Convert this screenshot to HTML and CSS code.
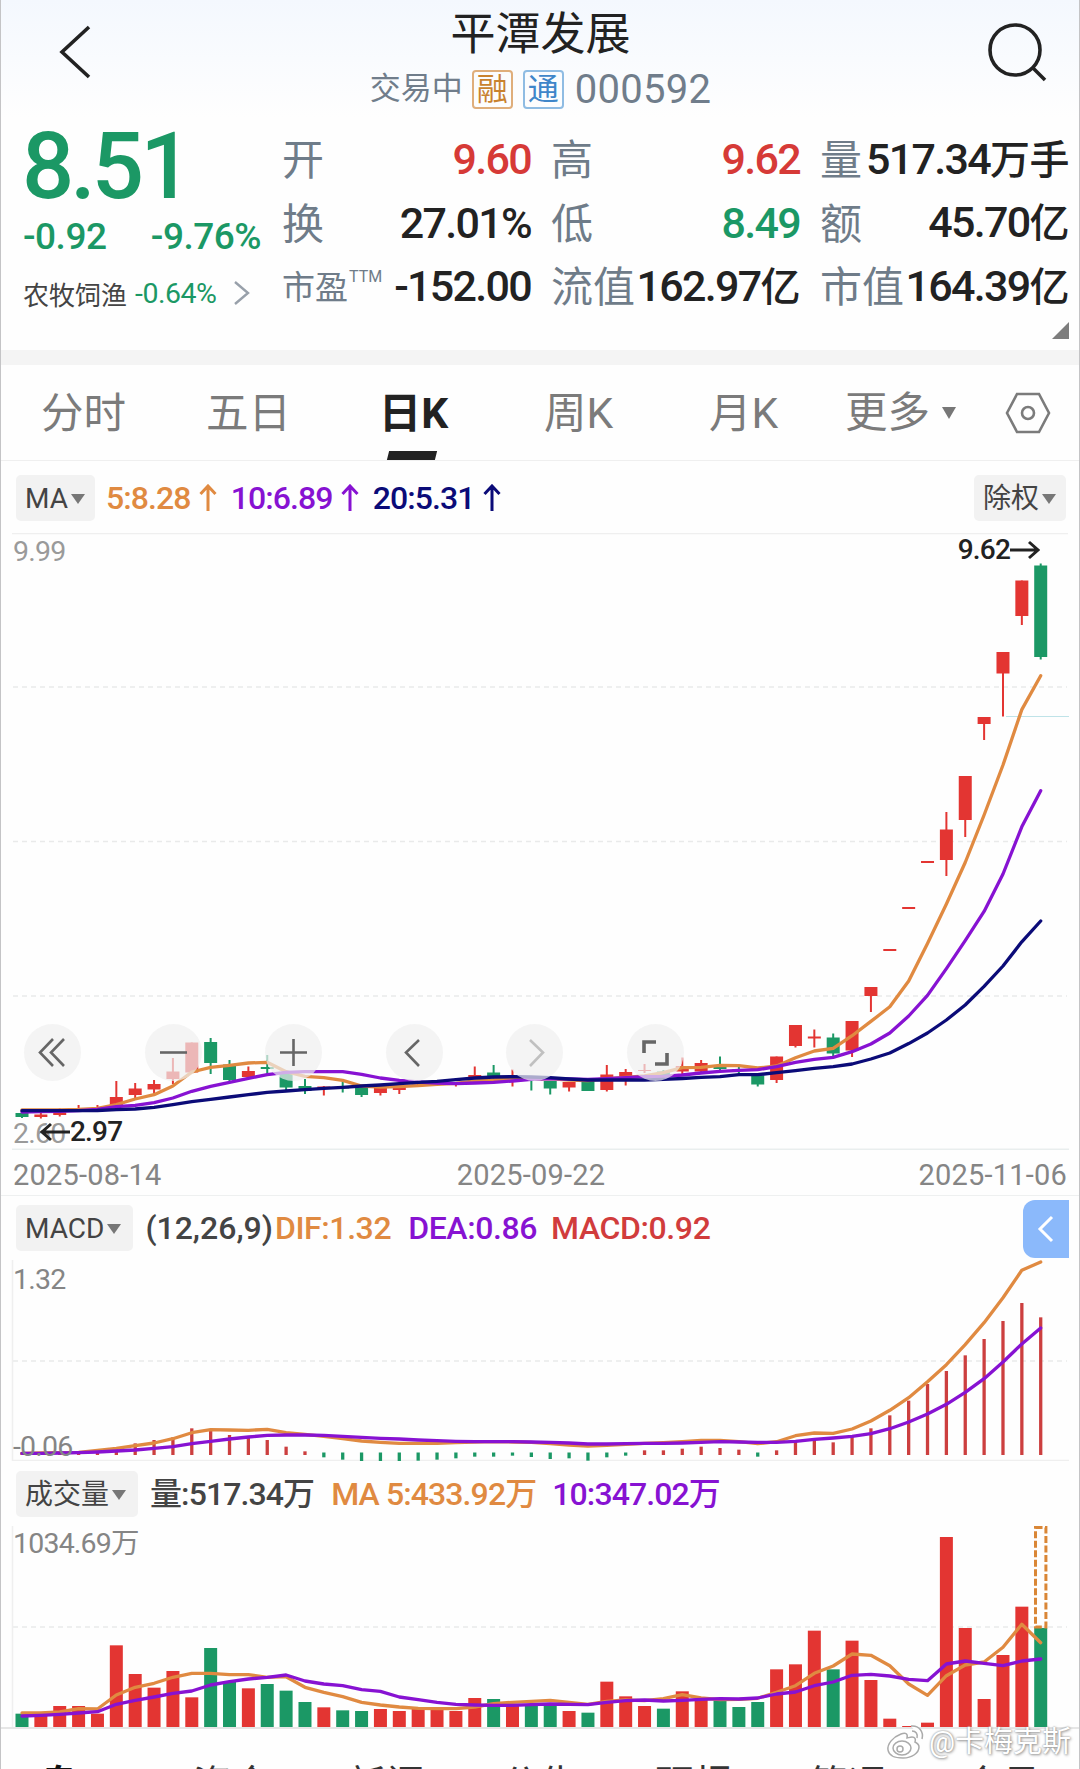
FILE: index.html
```html
<!DOCTYPE html>
<html lang="zh-CN">
<head>
    <meta charset="UTF-8" />
    <meta name="viewport" content="width=device-width, initial-scale=1" />
    <title>平潭发展 000592</title>

    <link rel="stylesheet" href="styles.css">
</head>
<body>

    <!-- 顶部标题 -->
    <header class="header">
        <svg class="back" width="36" height="60" viewBox="0 0 36 60"><path d="M31 5L4 30l27 25" /></svg>
        <div class="title">
            <h1>平潭发展</h1>
            <div class="sub">
                <span class="state">交易中</span>
                <span class="tag rong">融</span>
                <span class="tag tong">通</span>
                <span class="code">000592</span>
            </div>
        </div>
        <svg class="search" width="62" height="62" viewBox="0 0 62 62"><circle cx="28" cy="28" r="25" /><path d="M46 46l12 12" /></svg>
    </header>

    <!-- 行情 -->
    <section class="quote">
        <div class="now">
            <div class="price">8.51</div>
            <div class="change"><span>-0.92</span><span>-9.76%</span></div>
            <div class="sector">
                <span class="name">农牧饲渔</span>
                <span class="pct">-0.64%</span>
                <svg width="18" height="26" viewBox="0 0 18 26"><path d="M2 2l13 11L2 24" /></svg>
            </div>
        </div>
        <dl class="col">
            <div><dt>开</dt><dd class="up">9.60</dd></div>
            <div><dt>换</dt><dd>27.01%</dd></div>
            <div><dt class="small">市盈<sup>TTM</sup></dt><dd>-152.00</dd></div>
        </dl>
        <dl class="col">
            <div><dt>高</dt><dd class="up">9.62</dd></div>
            <div><dt>低</dt><dd class="down">8.49</dd></div>
            <div><dt>流值</dt><dd>162.97<b>亿</b></dd></div>
        </dl>
        <dl class="col">
            <div><dt>量</dt><dd>517.34<b>万手</b></dd></div>
            <div><dt>额</dt><dd>45.70<b>亿</b></dd></div>
            <div><dt>市值</dt><dd>164.39<b>亿</b></dd></div>
        </dl>
        <i class="corner"></i>
    </section>

    <!-- 周期切换 -->
    <nav class="tabs">
        <a>分时</a>
        <a>五日</a>
        <a class="active">日K</a>
        <a>周K</a>
        <a>月K</a>
        <a class="more">更多<i class="tri"></i></a>
        <svg class="setting" width="46" height="42" viewBox="0 0 46 42"><path d="M12 2h22l10 19-10 19H12L2 21z" /><circle cx="23" cy="21" r="6" /></svg>
    </nav>

    <!-- K线 -->
    <div class="bar bar-ma">
        <span class="chip">MA<i class="tri"></i></span>
        <span class="c5">5:8.28<svg class="arr" viewBox="0 0 18 28"><path d="M9 27V2M1.500 10L9 2l7.500 8" /></svg></span>
        <span class="c10">10:6.89<svg class="arr" viewBox="0 0 18 28"><path d="M9 27V2M1.500 10L9 2l7.500 8" /></svg></span>
        <span class="c20">20:5.31<svg class="arr" viewBox="0 0 18 28"><path d="M9 27V2M1.500 10L9 2l7.500 8" /></svg></span>
        <span class="chip right">除权<i class="tri"></i></span>
    </div>
    <div class="chart kline">
        <svg id="kline" width="1080" height="617" viewBox="0 533 1080 617"></svg>
        <span class="label max">9.99</span>
        <span class="label min">2.60</span>
        <span class="mark high">9.62<svg width="30" height="22" viewBox="0 0 30 22"><path d="M0 11h28M19 3l9 8-9 8" /></svg></span>
        <span class="mark low"><svg width="30" height="22" viewBox="0 0 30 22"><path d="M30 11H2M11 3l-9 8 9 8" /></svg>2.97</span>
        <div class="tools">
            <button><svg viewBox="0 0 57 57"><path d="M29 15L16 28.500 29 42M40 15L27 28.500 40 42" /></svg></button>
            <button><svg viewBox="0 0 57 57"><path d="M15 28.500h27" /></svg></button>
            <button><svg viewBox="0 0 57 57"><path d="M15 28.500h27M28.500 15v27" /></svg></button>
            <button><svg viewBox="0 0 57 57"><path d="M33 16L20 28.500 33 42" /></svg></button>
            <button class="off"><svg viewBox="0 0 57 57"><path d="M24 16l13 12.500L24 42" /></svg></button>
            <button><svg viewBox="0 0 57 57"><path class="box" d="M17 29V18h12M40 29v11H28" /></svg></button>
        </div>
    </div>
    <div class="dates"><span>2025-08-14</span><span>2025-09-22</span><span>2025-11-06</span></div>

    <!-- MACD -->
    <div class="bar bar-macd">
        <span class="chip">MACD<i class="tri"></i></span>
        <span class="dark">(12,26,9)</span>
        <span class="c5">DIF:1.32</span>
        <span class="c10">DEA:0.86</span>
        <span class="red">MACD:0.92</span>
        <span class="fold"><svg width="18" height="28" viewBox="0 0 18 28"><path d="M15 2L3 14l12 12" /></svg></span>
    </div>
    <div class="chart macd">
        <svg id="macd" width="1080" height="201" viewBox="0 1260 1080 201"></svg>
        <span class="label max">1.32</span>
        <span class="label min">-0.06</span>
    </div>

    <!-- 成交量 -->
    <div class="bar bar-vol">
        <span class="chip">成交量<i class="tri"></i></span>
        <span class="dark">量:517.34万</span>
        <span class="c5">MA 5:433.92万</span>
        <span class="c10">10:347.02万</span>
    </div>
    <div class="chart vol">
        <svg id="vol" width="1080" height="202" viewBox="0 1526 1080 202"></svg>
        <span class="label max">1034.69万</span>
    </div>

    <nav class="footer">
        <a class="active">盘口</a>
        <a>资金</a>
        <a>新闻</a>
        <a>公告</a>
        <a>研报</a>
        <a>简况</a>
        <a>会员</a>
    </nav>

    <div class="watermark">
        <svg width="40" height="36" viewBox="0 0 40 36">
            <path d="M15 10C7 13 1 20 2 26c1 6 8 8 15 8 9 0 16-5 16-11 0-3-2-4-4-5 1-3 0-5-3-5-2 0-4 1-5 1 1-4-1-6-6-4z" />
            <ellipse cx="16" cy="24" rx="9" ry="7" />
            <circle cx="14" cy="25" r="3" />
            <path d="M25 2c8-1 13 6 11 13M26 7c4 0 6 3 5 7" />
        </svg>
        <span>@卡梅克斯</span>
    </div>

    <script src="chart.js"></script>
</body>
</html>
```
FILE: styles.css
```css
* {
    box-sizing: border-box;
}
body {
    width: 1080px;
    height: 1769px;
    margin: 0;
    overflow: hidden;
    position: relative;
    background: #fefefe;
    font-family: Roboto, "Noto Sans CJK SC", sans-serif;
    color: #222;
    border-left: 1px solid #c4c4c6;
    border-right: 1px solid #c4c4c6;
}
svg {
    display: block;
    fill: none;
    flex: none;
}

/* 顶部标题 */
.header {
    height: 117px;
    display: flex;
    justify-content: space-between;
    padding: 0 30px 0 57px;
    background: linear-gradient(#f4f8fe, #fefefe);
}
.header svg {
    stroke: #222;
    stroke-width: 3.6;
}
.back {
    margin-top: 22px;
}
.search {
    margin-top: 22px;
}
.title {
    display: flex;
    flex-direction: column;
    align-items: center;
}
h1 {
    margin: 0;
    height: 68px;
    line-height: 70px;
    font-size: 45px;
    font-weight: 400;
}
.sub {
    display: flex;
    align-items: center;
    height: 42px;
    color: #707d8b;
}
.state {
    font-size: 31px;
    line-height: 38px;
    margin-right: 9px;
}
.tag {
    width: 41px;
    height: 39px;
    line-height: 35px;
    text-align: center;
    font-size: 31px;
    border: 2px solid;
    border-radius: 4px;
    margin-right: 10px;
}
.rong {
    color: #c9822f;
    border-color: #dfae7b;
}
.tong {
    color: #3f86c9;
    border-color: #8fbce3;
}
.code {
    font-size: 40px;
    margin-left: 1px;
    letter-spacing: 0.3px;
}

/* 行情 */
.quote {
    height: 233px;
    display: grid;
    grid-template-columns: 239px 249px 249px 249px;
    column-gap: 20px;
    padding: 11px 9px 0 22px;
    position: relative;
}
.now {
    color: #1b9865;
}
.price {
    height: 78px;
    line-height: 78px;
    font-size: 92px;
    font-weight: 500;
    letter-spacing: -4px;
    margin-left: -1px;
}
.change {
    display: flex;
    justify-content: space-between;
    height: 62px;
    line-height: 62px;
    font-size: 37px;
    font-weight: 500;
    letter-spacing: -0.5px;
    padding-right: 1px;
}
.sector {
    display: flex;
    align-items: center;
    height: 50px;
    font-size: 28.500px;
}
.sector .name {
    font-size: 26px;
    color: #444;
    margin-right: 8px;
}
.sector .pct {
    letter-spacing: -0.5px;
}
.sector svg {
    margin-left: 17px;
    stroke: #98a0aa;
    stroke-width: 2.4;
}
.col {
    margin: 0;
}
.col div {
    display: flex;
    justify-content: space-between;
    align-items: center;
    height: 63.500px;
    line-height: 63px;
    white-space: nowrap;
}
.col dt {
    color: #6f7c89;
    font-size: 42px;
    padding-top: 2px;
}
.col dt.small {
    font-size: 33px;
    display: flex;
}
.col sup {
    font-size: 16px;
    line-height: 42px;
    margin-left: 1px;
}
.col dd {
    margin: 0;
    font-size: 43px;
    font-weight: 500;
    letter-spacing: -1.7px;
}
.col b {
    font-size: 40px;
    font-weight: 500;
    letter-spacing: -0.5px;
}
.up {
    color: #d63a37;
}
.down {
    color: #1b9865;
}
.corner {
    position: absolute;
    right: 10px;
    bottom: 11px;
    border-left: 17px solid transparent;
    border-bottom: 17px solid #7d7d7d;
}

/* 周期切换 */
.tabs {
    height: 111px;
    border-top: 15px solid #f4f4f4;
    border-bottom: 1px solid #efefef;
    display: flex;
    align-items: center;
    font-size: 42.500px;
    color: #7b7b7b;
}
.tabs a {
    width: 165px;
    height: 95px;
    line-height: 97px;
    text-align: center;
    white-space: nowrap;
    position: relative;
}
.tabs .active {
    color: #222;
    font-weight: 700;
}
.tabs .active::after {
    content: "";
    position: absolute;
    left: 57px;
    bottom: 0;
    width: 48px;
    height: 9px;
    background: #222;
    transform: skewX(-14deg);
}
.tabs .more {
    display: flex;
    align-items: center;
    padding-left: 19px;
}
.setting {
    stroke: #7b7b7b;
    stroke-width: 2.6;
    margin-left: 14px;
}
.tri {
    display: inline-block;
    border: 7px solid transparent;
    border-top: 10px solid #777;
    border-bottom: 0;
    margin-left: 3px;
    vertical-align: 4px;
}
.more .tri {
    border-top-width: 12px;
    margin-left: 12px;
}

/* 指标栏 */
.bar {
    display: flex;
    align-items: center;
    padding-left: 15px;
    font-size: 32px;
    font-weight: 500;
    letter-spacing: -0.9px;
    white-space: nowrap;
    position: relative;
}
.chip {
    height: 46px;
    line-height: 47px;
    background: #f2f2f2;
    border-radius: 5px;
    padding: 0 10px 0 9px;
    font-size: 28px;
    font-weight: 400;
    letter-spacing: 0;
    color: #444;
}
.right {
    margin-left: auto;
}
.bar-ma {
    height: 73px;
    padding-right: 13px;
}
.bar-ma > .c5,
.bar-ma > .c10,
.bar-ma > .c20 {
    display: flex;
    align-items: center;
    margin-left: 14px;
}
.bar-ma > .c5 {
    margin-left: 11px;
}
.arr {
    width: 18px;
    height: 28px;
    margin-left: 8px;
    stroke: currentColor;
    stroke-width: 3;
}
.c5 {
    color: #e08a41;
}
.c10 {
    color: #8712d2;
}
.c20 {
    color: #0b0b78;
}
.red {
    color: #d13c3c;
}
.dark {
    color: #444;
}
.bar-macd {
    height: 65px;
    border-top: 1px solid #eef0f0;
    letter-spacing: -0.4px;
}
.bar-macd .chip {
    padding-right: 12px;
}
.bar-macd .dark {
    margin-left: 12px;
    letter-spacing: 0;
}
.bar-macd .c5 {
    margin-left: 2px;
}
.bar-macd .c10 {
    margin-left: 17px;
}
.bar-macd .red {
    margin-left: 14px;
}
.fold {
    width: 46px;
    height: 58px;
    margin: 1px 10px 0 auto;
    background: #8bb9fb;
    border-radius: 12px 0 0 12px;
    padding: 15px 0 0 14px;
}
.fold svg {
    stroke: #fff;
    stroke-width: 3;
}
.bar-vol {
    height: 65px;
    line-height: 40px;
}
.bar-vol .chip {
    padding-right: 12px;
}
.bar-vol .dark {
    margin-left: 12px;
}
.bar-vol .c5 {
    margin-left: 17px;
}
.bar-vol .c10 {
    margin-left: 16px;
}

/* 图表 */
.chart {
    position: relative;
    margin-left: -1px;
}
.chart .label {
    position: absolute;
    left: 13px;
    line-height: 30px;
    font-size: 28.500px;
    letter-spacing: -0.8px;
    color: #858585;
}
.kline {
    height: 617px;
    margin-top: -1px;
}
.kline .label {
    color: #9a9a9a;
}
.kline .max {
    top: 4px;
}
.kline .min {
    bottom: 1px;
}
.mark {
    position: absolute;
    display: flex;
    align-items: center;
    line-height: 30px;
    font-size: 28px;
    font-weight: 500;
    letter-spacing: -0.8px;
}
.mark svg {
    stroke: #222;
    stroke-width: 3;
}
.high {
    top: 2px;
    right: 39px;
}
.low {
    left: 40px;
    bottom: 3px;
}
.tools {
    position: absolute;
    left: 24px;
    top: 491px;
    width: 660px;
    display: flex;
    justify-content: space-between;
}
.tools button {
    width: 57px;
    height: 57px;
    padding: 0;
    border: 0;
    border-radius: 50%;
    background: rgba(240, 240, 240, 0.7);
}
.tools svg {
    stroke: #666;
    stroke-width: 2.6;
}
.tools .off svg {
    stroke: #c0c0c0;
}
.tools .box {
    stroke-width: 3.6;
}
.dates {
    height: 45px;
    line-height: 50px;
    display: flex;
    justify-content: space-between;
    padding: 0 12px;
    font-size: 29px;
    letter-spacing: 0.2px;
    color: #858585;
}
.dates span:nth-child(2) {
    margin-left: -18px;
}
.macd {
    height: 201px;
}
.macd .max {
    top: 5px;
}
.macd .min {
    bottom: -1px;
}
.vol {
    height: 203px;
    border-bottom: 2px solid #e6e6e6;
}
.vol .max {
    top: 3px;
}

/* 底部 */
.footer {
    display: flex;
    padding-top: 24px;
    font-size: 39px;
    color: #333;
}
.footer a {
    flex: 1;
    text-align: center;
}
.footer .active {
    font-weight: 700;
    color: #111;
}
.watermark {
    position: absolute;
    right: 8px;
    bottom: 9px;
    display: flex;
    align-items: center;
    gap: 3px;
    font-size: 29px;
    line-height: 36px;
    color: #fff;
    text-shadow: 0 0 2px #888, 1px 1px 3px #999;
}
.watermark svg {
    fill: #fff;
    stroke: #aaa;
    stroke-width: 1.5;
}
```
FILE: chart.js
```javascript
const STEP = 18.865;
const X0 = 22;
const RED = '#e33532';
const GREEN = '#1b9865';
const ORANGE = '#e08a41';
const PURPLE = '#8712d2';
const NAVY = '#0b0b78';

const px = i => X0 + i * STEP;

function line(x1, y1, x2, y2, color, w, extra = '') {
  return `<line x1="${x1}" y1="${y1}" x2="${x2}" y2="${y2}" stroke="${color}" stroke-width="${w}" ${extra}/>`;
}
function rect(x, y, w, h, color) {
  return `<rect x="${x}" y="${y}" width="${w}" height="${h}" fill="${color}"/>`;
}
function curve(values, color) {
  const pts = values.map((v, i) => `${px(i).toFixed(1)},${v.toFixed(1)}`).join(' ');
  return `<polyline points="${pts}" stroke="${color}" stroke-width="3.3" stroke-linejoin="round" stroke-linecap="round"/>`;
}
function grid(y) {
  return line(13, y, 1067, y, '#e9eaea', 1.5, 'stroke-dasharray="5 4"');
}

// 颜色, 最高, 实体上, 实体下, 最低
const candles = [
  ['g', 1112, 1113, 1117, 1118], ['r', 1113, 1114.5, 1117, 1118.5], ['r', 1108.5, 1112.5, 1115, 1116.5],
  ['r', 1105, 1110, 1111.5, 1112], ['r', 1105, 1108, 1109.5, 1111], ['r', 1081, 1097, 1105, 1106],
  ['r', 1083, 1088.5, 1095, 1098], ['r', 1080, 1084, 1089.5, 1093], ['r', 1058, 1071.5, 1079, 1084],
  ['r', 1042.5, 1042.5, 1072.5, 1072.5], ['g', 1038, 1042, 1063, 1074], ['g', 1060, 1064.5, 1080, 1081],
  ['r', 1066.5, 1071, 1077, 1077], ['g', 1055, 1067, 1069, 1075], ['g', 1070, 1072, 1087.5, 1090],
  ['g', 1079, 1086, 1091, 1094], ['r', 1086, 1086.5, 1088, 1095.5], ['g', 1081.5, 1087, 1088.5, 1092.5],
  ['g', 1086, 1087.5, 1095, 1097], ['r', 1087, 1087.5, 1093, 1095.5], ['r', 1087, 1087, 1090, 1094],
  ['r', 1084, 1084.5, 1086, 1087], ['r', 1083, 1083.5, 1085, 1086], ['r', 1082.5, 1083, 1084.5, 1086.5],
  ['r', 1066.5, 1075, 1077, 1078], ['g', 1065, 1072.5, 1077, 1079], ['r', 1069.5, 1077, 1081.5, 1086.5],
  ['g', 1078, 1078, 1080, 1090.5], ['g', 1081, 1081, 1088.5, 1094.5], ['r', 1082, 1082, 1087.5, 1091.5],
  ['g', 1081, 1081, 1091, 1091], ['r', 1065, 1074.5, 1090, 1091.5], ['r', 1069, 1072, 1076.5, 1085.5],
  ['r', 1064, 1070, 1071, 1073], ['g', 1070, 1071.5, 1075, 1075], ['r', 1057.5, 1066, 1071.5, 1074],
  ['r', 1060, 1063, 1071.5, 1072], ['g', 1056.5, 1067, 1069, 1070.5], ['g', 1067, 1069, 1070, 1074],
  ['g', 1075, 1075.5, 1084.5, 1086.5], ['r', 1056.5, 1056.5, 1080, 1083], ['r', 1025, 1025, 1046, 1047.5],
  ['r', 1029.5, 1036.5, 1038.5, 1047.5], ['g', 1033.5, 1037.5, 1053.5, 1056], ['r', 1021, 1021, 1050.5, 1057],
  ['r', 987, 987, 996, 1012], ['r', 949, 949, 951, 951], ['r', 907, 907, 909, 909],
  ['r', 861, 861, 863, 863], ['r', 812, 829.5, 860, 876], ['r', 776, 776, 820, 837],
  ['r', 717, 717, 724, 740], ['r', 652, 652, 673.5, 716.5], ['r', 580.5, 580.5, 616, 625],
  ['g', 563.5, 565.5, 657, 659.5]
];

const ma5 = [1110, 1110, 1110, 1109.5, 1108.3, 1104.7, 1099, 1094.7, 1086, 1072, 1067.3, 1065.3, 1063, 1062.3,
  1071.7, 1076.3, 1077.7, 1080.3, 1086, 1087, 1086.5, 1085.7, 1084.3, 1083.3, 1081, 1080, 1078.5, 1079.3,
  1078.7, 1080, 1080.7, 1078.7, 1077.3, 1076, 1072.7, 1067.7, 1067.3, 1065.3, 1065.7, 1068, 1066, 1057.7,
  1051, 1048.3, 1035.7, 1021.4, 1006.8, 981, 943.6, 904, 862.5, 815, 765, 709.6, 675.7];
const ma10 = [1112, 1111.7, 1111.3, 1110.7, 1109.3, 1106.7, 1105.3, 1102.7, 1098, 1091.3, 1086.3, 1082.3, 1078.3,
  1074.7, 1072.3, 1071.7, 1071.7, 1071.7, 1074.3, 1078, 1080.3, 1082, 1083, 1083.7, 1083, 1082.3, 1081, 1079.3,
  1078.7, 1079, 1079.5, 1078.7, 1077.7, 1076.7, 1076.3, 1075, 1073, 1071.3, 1070.3, 1069.7, 1066.7, 1062.3,
  1059.3, 1057.3, 1051.7, 1044, 1033, 1016, 995.4, 968.6, 940.7, 911.4, 874, 826.8, 790.7];
const ma20 = [1110.7, 1110.7, 1110.7, 1110.7, 1110.5, 1109.7, 1109, 1107.3, 1104.7, 1101.7, 1099.3, 1097, 1094.7,
  1092.3, 1091, 1089.7, 1088.3, 1087.3, 1086, 1085, 1083.7, 1082.3, 1081.3, 1079.7, 1078, 1077, 1076.7, 1077,
  1077.7, 1079, 1080, 1080, 1080, 1080, 1079.3, 1078.5, 1077.3, 1076.7, 1074.7, 1074.7, 1072.7, 1070.7,
  1068.3, 1066.7, 1064, 1059, 1053, 1043.6, 1033, 1020, 1005, 986.4, 966, 941.8, 921];

let k = line(12, 533.5, 1068, 533.5, '#efefef', 1.5);
k += grid(687) + grid(841.5) + grid(996);
k += line(12, 1149.3, 1069, 1149.3, '#e9eeee', 1.5);
k += line(1006, 716.5, 1069, 716.5, '#bfe3e8', 1);
candles.forEach(([c, hi, a, b, lo], i) => {
  const color = c === 'r' ? RED : GREEN;
  k += line(px(i), hi, px(i), lo, color, 2) + rect(px(i) - 6.5, a, 13, b - a, color);
});
k += curve(ma5, ORANGE) + curve(ma10, PURPLE) + curve(ma20, NAVY);
document.getElementById('kline').innerHTML = k;

// 副图数据按 1/3 像素记录
const third = (base, list) => list.map(v => base + v / 3);

const bars = [787, 786, 785, 783, 781, 775, 760, 750, 742, 715, 722, 735, 740, 750, 770, 784,
  802, 809, 815, 815, 815, 812, 809, 805, 800, 800, 797, 801, 807, 805, 812, 802, 797,
  781, 781, 776, 770, 774, 779, 800, 781, 755, 750, 757, 740, 715, 676, 632, 582, 543, 496, 447, 393, 339, 382];
const dif = [790, 789, 788, 787, 781, 775, 767, 759, 746, 728, 719, 720, 721, 718, 728, 733, 739, 746, 753, 757,
  760, 760, 760, 758, 756, 755, 756, 757, 761, 765, 768, 766, 763, 760, 758, 755, 751, 751, 755, 761, 755, 737,
  729, 730, 717, 693, 661, 623, 575, 524, 464, 398, 323, 241, 216];
const dea = [790, 790, 789, 788, 786, 783, 780, 775, 770, 761, 754, 747, 741, 736, 735, 735, 736, 739, 742, 745,
  747, 750, 752, 754, 755, 755, 755, 756, 757, 759, 762, 762, 761, 760, 760, 759, 757, 755, 756, 757, 757, 754,
  748, 744, 739, 731, 716, 696, 672, 643, 607, 566, 516, 462, 414];

let m = grid(1361) + line(12.5, 1260, 12.5, 1461, '#efefef', 1.5) + line(12, 1460.5, 1069, 1460.5, '#efefef', 1.5);
third(1190, bars).forEach((y, i) => {
  const down = y > 1453.4;
  m += line(px(i), down ? 1452.5 : y, px(i), down ? y : 1455, down ? GREEN : '#cc3f3f', 3.3);
});
m += curve(third(1190, dif), ORANGE) + curve(third(1190, dea), PURPLE);
document.getElementById('macd').innerHTML = m;

const vols = [641, 640, 618, 618, 641, 436, 522, 563, 513, 592, 444, 543, 565, 552, 572, 606, 622, 631, 633, 627,
  633, 622, 629, 633, 594, 597, 617, 617, 613, 633, 638, 545, 589, 618, 626, 574, 597, 601, 621, 606, 508, 493,
  392, 508, 422, 540, 656, 678, 668, 111, 384, 597, 465, 320, 384];
const volColor = 'grrrrrrrrrggrgggrggrrrrrrgrggrgrrrgrrgggrrrgrrrrrrrrrrg';
const vol5 = [639, 639, 636, 626, 627, 585, 562, 550, 532, 520, 520, 524, 524, 532, 530, 562, 577, 590, 607, 615,
  621, 625, 626, 626, 621, 611, 607, 604, 601, 607, 613, 604, 600, 602, 596, 584, 594, 599, 598, 595, 577, 557,
  520, 498, 462, 466, 497, 552, 586, 527, 495, 486, 442, 373, 428];
const vol10 = [648, 646, 643, 639, 635, 613, 601, 591, 580, 573, 555, 545, 537, 532, 525, 543, 552, 557, 569, 574,
  591, 599, 607, 613, 615, 616, 616, 614, 612, 613, 614, 607, 602, 600, 603, 601, 598, 596, 597, 594, 582, 576,
  557, 546, 526, 523, 528, 538, 542, 492, 483, 490, 497, 483, 477];

let v = grid(1627) + line(12.5, 1526, 12.5, 1727, '#efefef', 1.5);
third(1500, vols).forEach((y, i) => {
  v += rect(px(i) - 6.5, y, 13, 1727 - y, volColor[i] === 'r' ? RED : GREEN);
});
// 预测成交量
v += `<rect x="${px(54) - 5.2}" y="1527.500" width="10.400" height="99.500" stroke="#d98636" stroke-width="3" stroke-dasharray="7 2.500"/>`;
v += curve(third(1500, vol5), ORANGE) + curve(third(1500, vol10), PURPLE);
document.getElementById('vol').innerHTML = v;
```
